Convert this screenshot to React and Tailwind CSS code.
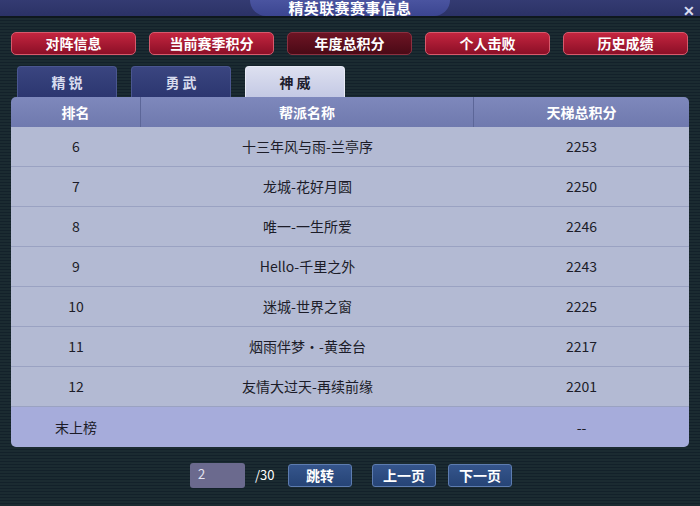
const topButtons = ['对阵信息', '当前赛季积分', '年度总积分', '个人击败', '历史成绩'];
const tabs = ['精 锐', '勇 武', '神 威'];
const rows = [
  ['6', '十三年风与雨-兰亭序', '2253'],
  ['7', '龙城-花好月圆', '2250'],
  ['8', '唯一-一生所爱', '2246'],
  ['9', 'Hello-千里之外', '2243'],
  ['10', '迷城-世界之窗', '2225'],
  ['11', '烟雨伴梦・-黄金台', '2217'],
  ['12', '友情大过天-再续前缘', '2201'],
];

const font = { fontFamily: '"Noto Sans CJK SC", "Noto Sans", sans-serif' };

export default function App() {
  return (
    <div
      className="w-[700px] h-[506px] overflow-hidden flex flex-col bg-[repeating-linear-gradient(0deg,#1b2b31_0px,#1b2b31_2px,#13212a_2px,#13212a_3px)]"
      style={font}
    >
      {/* title bar */}
      <div className="relative h-[18px] shrink-0 bg-gradient-to-b from-[#343b72] to-[#2b3266] border-b-2 border-[#0e181d] flex justify-center">
        <div className="w-[200px] h-full rounded-b-[60px] bg-gradient-to-b from-[#4a54a0] to-[#3b4590] flex items-start justify-center">
          <span className="text-white text-[15px] font-bold leading-none mt-0 tracking-wide">精英联赛赛事信息</span>
        </div>
        <span className="absolute right-[5px] top-[3px] text-[#d8dcf0] text-[14px] font-bold leading-none">✕</span>
      </div>

      {/* red buttons */}
      <div className="flex gap-[13px] px-[11px] mt-[14px]">
        {topButtons.map((t, i) => (
          <div
            key={t}
            className={`w-[125px] h-[23px] rounded-[5px] flex items-center justify-center text-white text-[14px] font-bold border ${
              i === 2
                ? 'bg-gradient-to-b from-[#6e1424] to-[#4a0a16] border-[#8a3040]'
                : 'bg-gradient-to-b from-[#c4253f] to-[#8c0f27] border-[#d65a6c]'
            }`}
          >
            {t}
          </div>
        ))}
      </div>

      {/* tabs */}
      <div className="flex gap-[14px] pl-[17px] mt-[11px] h-[31px]">
        {tabs.map((t, i) => (
          <div
            key={t}
            className={`w-[100px] h-full rounded-t-[4px] flex items-center justify-center text-[14px] font-bold border border-b-0 ${
              i === 2
                ? 'bg-gradient-to-b from-[#dde0f0] to-[#c4c9e4] border-[#e8eaf6] text-[#1c1c2c]'
                : 'bg-gradient-to-b from-[#3a4580] to-[#2c3670] border-[#4a5690] text-[#d8dcee]'
            }`}
          >
            {t}
          </div>
        ))}
      </div>

      {/* table */}
      <div className="mx-[11px] w-[678px] rounded-[5px] overflow-hidden">
        <div className="flex h-[30px] bg-gradient-to-b from-[#7e88bc] to-[#6f79ae] text-white text-[14px] font-bold">
          <div className="w-[130px] flex items-center justify-center border-r border-[#5c6698]">排名</div>
          <div className="w-[333px] flex items-center justify-center border-r border-[#5c6698]">帮派名称</div>
          <div className="flex-1 flex items-center justify-center">天梯总积分</div>
        </div>
        {rows.map((r) => (
          <div key={r[0]} className="flex h-[40px] bg-[#b3bad3] border-b border-[#9aa2c2] text-[14px] text-[#1c1c28]">
            <div className="w-[130px] flex items-center justify-center">{r[0]}</div>
            <div className="w-[333px] flex items-center justify-center">{r[1]}</div>
            <div className="flex-1 flex items-center justify-center">{r[2]}</div>
          </div>
        ))}
        <div className="flex h-[40px] bg-[#a6acdb] text-[14px] text-[#1c1c28]">
          <div className="w-[130px] flex items-center justify-center">末上榜</div>
          <div className="w-[333px]"></div>
          <div className="flex-1 flex items-center justify-center">--</div>
        </div>
      </div>

      {/* pagination */}
      <div className="flex items-center mt-[15px] pl-[190px] h-[26px] text-white text-[13px]">
        <div className="w-[55px] h-[25px] rounded-[3px] bg-[#6b6a8e] flex items-start pl-[8px] pt-[1px] text-[#e4e4f0]">2</div>
        <span className="ml-[10px] w-[33px]">/30</span>
        <div className="w-[64px] h-[23px] rounded-[3px] bg-gradient-to-b from-[#35558c] to-[#264476] border border-[#5d7cb0] flex items-center justify-center font-bold text-[14px]">跳转</div>
        <div className="ml-[20px] w-[64px] h-[23px] rounded-[3px] bg-gradient-to-b from-[#35558c] to-[#264476] border border-[#5d7cb0] flex items-center justify-center font-bold text-[14px]">上一页</div>
        <div className="ml-[12px] w-[64px] h-[23px] rounded-[3px] bg-gradient-to-b from-[#35558c] to-[#264476] border border-[#5d7cb0] flex items-center justify-center font-bold text-[14px]">下一页</div>
      </div>
    </div>
  );
}
